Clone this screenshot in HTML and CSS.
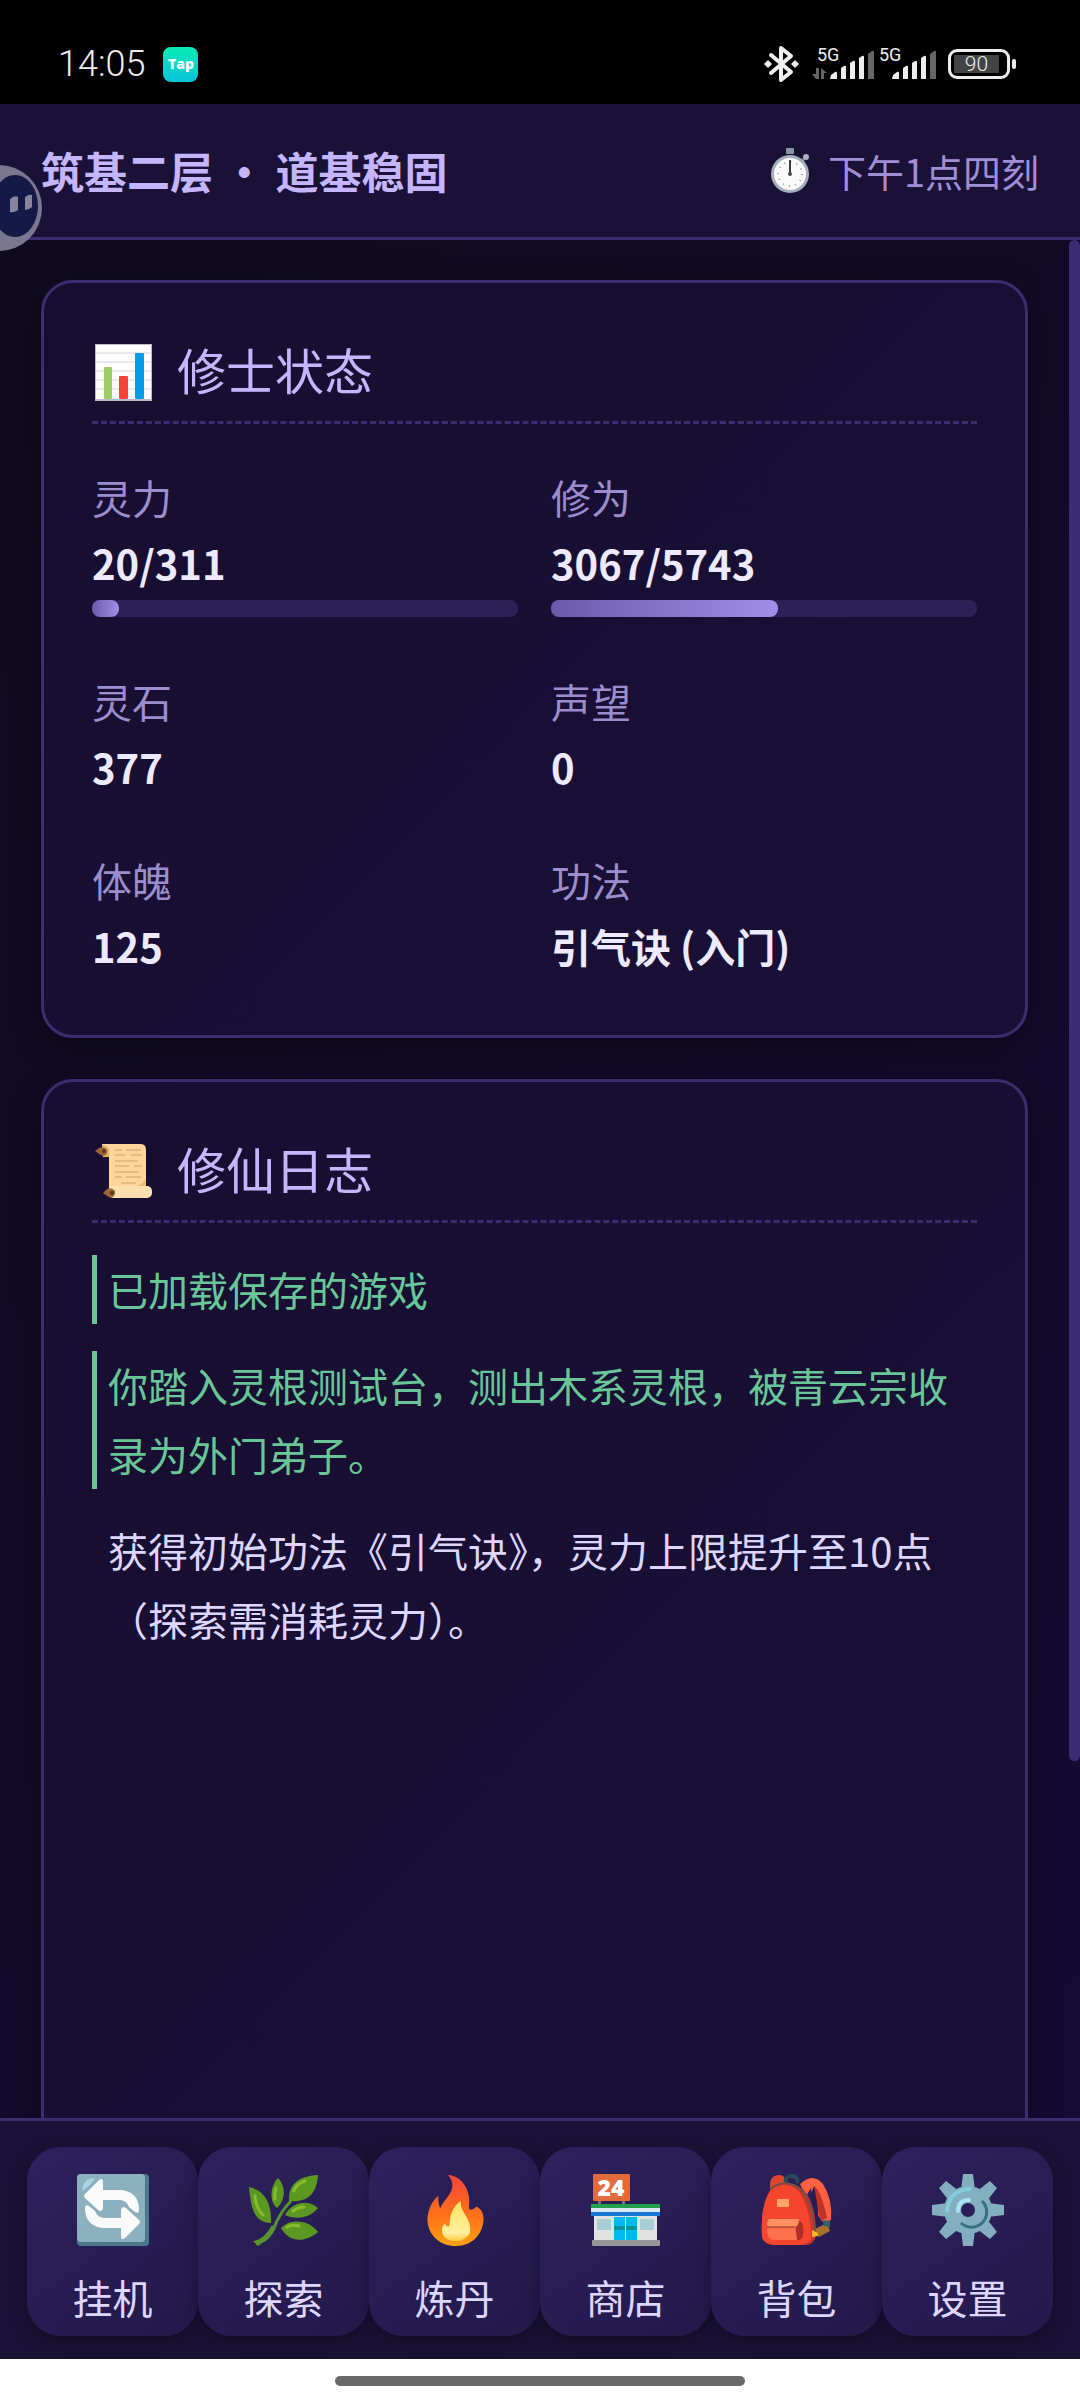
FILE: index.html
```html
<!DOCTYPE html>
<html lang="zh-CN">
<head>
  <meta charset="UTF-8" />
  <meta name="viewport" content="width=device-width, initial-scale=1.0" />
  <title>修仙日志</title>
  <link rel="stylesheet" href="styles.css">
</head>
<body>
  <div class="status-bar">
    <div class="status-left">
      <span class="clock">14:05</span>
      <span class="tap">Tap</span>
    </div>
    <div class="status-right">
      <svg class="bluetooth" viewBox="0 0 35 38" width="35" height="38">
        <path d="M7 10 L27 27 L17 35 V3 L27 11 L7 28" fill="none" stroke="#eee" stroke-width="4" stroke-linejoin="round" stroke-linecap="round" />
        <path d="M4 15 L8 19 L4 23 L0 19 Z M31 15 L35 19 L31 23 L27 19 Z" fill="#eee" />
      </svg>
      <svg class="signal" viewBox="0 0 124 36" width="124" height="36">
        <g fill="#666">
          <path d="M4 22 h3 v11 h-3 l-4 -5 h4 Z M9 22 l6 5 h-3 v6 h-3 Z" />
          <path d="M56 8 l4 -3 q2 -1 2 1 v27 h-6 Z M118 8 l4 -3 q2 -1 2 1 v27 h-6 Z" />
        </g>
        <g fill="#eee">
          <path d="M19 29 l4 -3 q2 -1 2 1 v6 h-7 Z M29 22 l3 -2 q2 -1 2 1 v12 h-5 Z M38 17 l3 -2 q2 -1 2 1 v17 h-5 Z M47 12 l3 -2 q2 -1 2 1 v22 h-5 Z" />
          <path d="M81 29 l4 -3 q2 -1 2 1 v6 h-7 Z M91 22 l3 -2 q2 -1 2 1 v12 h-5 Z M100 17 l3 -2 q2 -1 2 1 v17 h-5 Z M109 12 l3 -2 q2 -1 2 1 v22 h-5 Z" />
          <text class="net" x="5" y="15">5G</text>
          <text class="net" x="67" y="15">5G</text>
        </g>
      </svg>
      <span class="battery"><span class="battery-level">90</span></span>
    </div>
  </div>

  <div class="game">
    <header class="top">
      <h1>筑基二层 · 道基稳固</h1>
      <div class="time">
        <svg viewBox="0 0 38 45" width="38" height="45">
          <rect x="15" y="0" width="8" height="6" rx="1" fill="#8a93a6" />
          <path d="M30 14 L35 9" stroke="#6d7a8a" stroke-width="3" />
          <circle cx="35" cy="9" r="3" fill="#a8b2bf" />
          <circle cx="19" cy="26" r="19" fill="#a4b1bd" />
          <circle cx="19" cy="26" r="16" fill="#fafafa" />
          <circle cx="19" cy="26" r="12" fill="none" stroke="#9aa3ab" stroke-width="2" stroke-dasharray="1 5.28" />
          <path d="M19 12 V26" stroke="#3b3b3b" stroke-width="2" />
          <circle cx="19" cy="26" r="2" fill="#5a3b3b" />
        </svg>
        <span>下午1点四刻</span>
      </div>
    </header>

    <div class="scroll">
      <main class="content">
        <section class="card">
          <h2>
            <svg viewBox="0 0 57 57" width="57" height="57">
              <rect width="57" height="57" fill="#b8bcc8" />
              <rect x="1" y="1" width="55" height="54" fill="#fff" />
              <path d="M1 9 H56 M1 18 H56 M1 27 H56 M1 36 H56 M1 45 H56" stroke="#cfd6dd" stroke-width="1" />
              <rect x="9" y="23" width="8" height="32" rx="1" fill="#9ccc65" />
              <rect x="24" y="32" width="9" height="23" rx="1" fill="#f44336" />
              <rect x="40" y="9" width="9" height="46" rx="1" fill="#039be5" />
            </svg>
            修士状态
          </h2>
          <div class="stats">
            <div class="stat">
              <div class="label">灵力</div>
              <div class="value">20/311</div>
              <div class="bar"><div class="fill" style="width: 6.4%"></div></div>
            </div>
            <div class="stat">
              <div class="label">修为</div>
              <div class="value">3067/5743</div>
              <div class="bar"><div class="fill" style="width: 53.4%"></div></div>
            </div>
            <div class="stat">
              <div class="label">灵石</div>
              <div class="value">377</div>
            </div>
            <div class="stat">
              <div class="label">声望</div>
              <div class="value">0</div>
            </div>
            <div class="stat">
              <div class="label">体魄</div>
              <div class="value">125</div>
            </div>
            <div class="stat">
              <div class="label">功法</div>
              <div class="value">引气诀 (入门)</div>
            </div>
          </div>
        </section>

        <section class="card log">
          <h2>
            <svg viewBox="0 0 57 57" width="57" height="57">
              <path d="M7 1 H46 Q51 1 51 7 V45 H14 V14 H8 Z" fill="#ffd59b" />
              <path d="M51 36 V46 H26 Q45 45 51 36 Z" fill="#f0b96f" />
              <path d="M8 2 Q16 3 14 14 H9 Q5 9 8 2 Z" fill="#e5ad66" />
              <path d="M0 8 l4 -3 q5 -2 8 2 q1 5 -4 6 l-4 -2 Z" fill="#9a6537" />
              <circle cx="9" cy="8" r="2" fill="#5d3b1e" />
              <rect x="13" y="43" width="44" height="12" rx="5" fill="#ffdfae" />
              <path d="M8 50 l4 -4 q5 -2 8 2 q1 5 -4 7 l-4 -2 Z" fill="#9a6537" />
              <circle cx="17" cy="50" r="2" fill="#5d3b1e" />
              <path d="M20 7 h7 M31 7 h15 M20 12 h10 M36 12 h11 M20 18 h23 M20 23 h14 M39 23 h8 M20 29 h24 M20 34 h7 M31 34 h15 M26 40 h15" stroke="#cf9f66" stroke-width="1" />
            </svg>
            修仙日志
          </h2>
          <p class="entry success">已加载保存的游戏</p>
          <p class="entry success">你踏入灵根测试台，测出木系灵根，被青云宗收录为外门弟子。</p>
          <p class="entry">获得初始功法《引气诀》，灵力上限提升至10点（探索需消耗灵力）。</p>
        </section>
      </main>
      <div class="scrollbar"><div class="thumb"></div></div>
    </div>

    <nav class="actions">
      <button type="button">
        <svg viewBox="0 0 72 72" width="72" height="72">
          <rect width="72" height="72" rx="4" fill="#4c788a" />
          <rect width="68" height="68" rx="4" fill="#8db0bf" />
          <path d="M5 17 Q6 4 18 4 Q14 12 5 17 Z" fill="#a9d2e2" />
          <path d="M8 20 L22 6 Q26 3 26 8 V16 H44 Q62 18 62 36 Q62 40 58 38 L52 33 Q50 27 43 26 H26 V34 Q25 39 21 36 L8 24 Q6 22 8 20 Z" fill="#fafafa" />
          <path d="M8 20 L22 6 Q26 3 26 8 V16 H44 Q62 18 62 36 Q62 40 58 38 L52 33 Q50 27 43 26 H26 V34 Q25 39 21 36 L8 24 Q6 22 8 20 Z" fill="#fafafa" transform="rotate(180 35 35)" />
        </svg>
        <span>挂机</span>
      </button>
      <button type="button">
        <svg viewBox="0 0 72 72" width="72" height="72">
          <path d="M8 70 Q18 67 26 54 Q32 38 43 27" fill="none" stroke="#57952b" stroke-width="3" />
          <path d="M5 67 Q16 66 24 51 L28 54 Q22 66 14 69 L10 72 Z" fill="#57952b" />
          <g fill="#5b9821">
            <path d="M1 13 C14 16 24 26 23 49 C6 49 3 34 1 13 Z" />
            <path d="M30 4 C38 12 38 26 29 34 C21 28 22 12 30 4 Z" />
            <path d="M70 1 C69 19 60 29 41 27 C40 11 50 2 70 1 Z" />
            <path d="M70 34 C62 44 49 46 37 41 C44 28 60 25 70 34 Z" />
            <path d="M70 58 C58 68 42 70 33 54 C44 43 62 47 70 58 Z" />
          </g>
          <g fill="none" stroke="#87bd2b" stroke-width="3" stroke-linecap="round">
            <path d="M7 22 Q8 34 15 41" />
            <path d="M28 14 Q26 20 27 25" />
            <path d="M46 17 Q48 10 57 7" />
            <path d="M45 37 Q50 33 56 33" />
            <path d="M39 53 Q44 50 51 52" />
          </g>
        </svg>
        <span>探索</span>
      </button>
      <button type="button">
        <svg viewBox="-8 0 72 73" width="72" height="72">
          <defs>
            <linearGradient id="flame" x1="0" y1="0" x2="0" y2="1">
              <stop offset="0" stop-color="#f4433c" />
              <stop offset="0.6" stop-color="#ff7417" />
              <stop offset="1" stop-color="#fca311" />
            </linearGradient>
            <linearGradient id="core" x1="0" y1="0" x2="0" y2="1">
              <stop offset="0" stop-color="#ffe45c" />
              <stop offset="0.8" stop-color="#fff0a0" />
              <stop offset="1" stop-color="#ffc93c" />
            </linearGradient>
          </defs>
          <path d="M21 1 C36 2 45 18 42 35 Q45 38 50 33 C55 36 57 40 57 46 C56 62 45 73 29 73 C12 73 0 61 0 45 C1 35 5 27 11 22 Q11 30 13 35 C17 24 33 16 21 1 Z" fill="url(#flame)" />
          <path d="M34 27 C32 39 46 44 43 60 Q38 68 29 68 Q18 68 15 60 Q14 53 18 50 Q19 54 22 53 C24 51 20 37 34 27 Z" fill="url(#core)" />
        </svg>
        <span>炼丹</span>
      </button>
      <button type="button">
        <svg viewBox="-1 0 72 72" width="72" height="72">
          <path d="M7 26 h3 v5 h-3 Z M31 26 h3 v5 h-3 Z" fill="#757575" />
          <rect x="2" y="0" width="37" height="27" rx="1" fill="#e16b3b" />
          <text class="sign" x="20" y="22">24</text>
          <rect x="3" y="42" width="63" height="26" fill="#e2e2e2" />
          <rect x="0" y="30" width="69" height="12" rx="1" fill="#1f9bd8" />
          <rect x="0" y="30" width="69" height="5" fill="#22a14c" />
          <rect x="0" y="34" width="69" height="4" fill="#d9e8f4" />
          <rect x="0" y="38" width="69" height="4" fill="#1976d2" />
          <rect x="23" y="43" width="23" height="24" fill="#00b8f0" />
          <rect x="23" y="52" width="23" height="4" fill="#10919c" />
          <rect x="34" y="43" width="1" height="24" fill="#c8eefa" />
          <rect x="6" y="45" width="14" height="11" fill="#a9cdd5" />
          <rect x="49" y="45" width="14" height="11" fill="#a9cdd5" />
          <rect x="1" y="66" width="68" height="6" rx="1" fill="#95959a" />
        </svg>
        <span>商店</span>
      </button>
      <button type="button">
        <svg viewBox="0 0 72 72" width="72" height="72">
          <path d="M9 14 Q8 2 17 1 Q26 0 24 11 Z" fill="#e0452f" />
          <path d="M25 8 Q24 2 31 2 Q38 3 36 9" fill="none" stroke="#2b4a5a" stroke-width="4" />
          <path d="M39 10 Q52 -2 62 10 Q72 26 70 46 L63 49 Q53 40 50 14 L45 22 Z" fill="#ff6042" />
          <path d="M53 12 Q57 18 57 42 Q52 34 50 20 Z" fill="#281d54" />
          <path d="M53 12 Q60 16 66 44 L61 46 Q57 42 57 34 Z" fill="#c4302a" />
          <path d="M52 56 L66 49 L69 57 L58 63 Z" fill="#a8712b" />
          <path d="M62 46 l7 1 v6 l-6 -1 Z" fill="#37616b" />
          <path d="M9 16 Q24 2 43 16 Q55 30 55 62 Q52 71 45 71 H14 Q3 70 1 63 Q-1 34 9 16 Z" fill="#cc352b" />
          <path d="M9 17 Q24 4 38 18 Q50 34 50 66 Q45 71 35 71 H12 Q2 70 1 62 Q-1 33 9 17 Z" fill="#f6452f" />
          <path d="M9 15 Q24 4 38 14 Q52 26 54 60" fill="none" stroke="#6e5447" stroke-width="2" />
          <rect x="16" y="25" width="12" height="8" rx="1" fill="#ffa468" />
          <path d="M6 50 H38 Q43 58 38 66 H12 Q5 65 6 50 Z" fill="#ff704f" />
          <path d="M34 49 Q44 42 42 62 Q40 67 36 66 Z" fill="#b12d26" />
          <path d="M8 45 H38 Q38 52 34 53 H8 Q4 50 8 45 Z" fill="#ff9060" />
          <path d="M6 53 H34" stroke="#8d2a20" stroke-width="1" />
          <path d="M51 56 l6 3 v3 l-6 1 Z" fill="#f5b921" />
        </svg>
        <span>背包</span>
      </button>
      <button type="button">
        <svg viewBox="0 0 72 72" width="72" height="72">
          <g fill="#82aebd">
            <circle cx="36" cy="36" r="24" />
            <path d="M31 0 H41 L43 16 H29 Z M31 72 H41 L43 56 H29 Z M0 31 V41 L16 43 V29 Z M72 31 V41 L56 43 V29 Z" />
            <path d="M31 0 H41 L43 16 H29 Z M31 72 H41 L43 56 H29 Z M0 31 V41 L16 43 V29 Z M72 31 V41 L56 43 V29 Z" transform="rotate(45 36 36)" />
          </g>
          <path d="M15 37 Q17 16 38 15" fill="none" stroke="#83cbdb" stroke-width="4" stroke-linecap="round" />
          <path d="M50 27 A15 15 0 0 1 29 49" fill="none" stroke="#36727f" stroke-width="3" />
          <path d="M26 37 Q26 26 37 26" fill="none" stroke="#a5e4f0" stroke-width="4" stroke-linecap="round" />
          <circle cx="36" cy="36" r="7" fill="#281d54" />
        </svg>
        <span>设置</span>
      </button>
    </nav>
  </div>

  <div class="gesture"><div class="pill"></div></div>

  <!-- floating assistant, half hidden behind the left edge -->
  <svg class="assistant" viewBox="0 0 44 88" width="44" height="88">
    <circle cx="-1" cy="44" r="43" fill="#7b7690" />
    <ellipse cx="15" cy="42" rx="23" ry="31" fill="#141a45" />
    <path d="M10 35 q4 -4 8 -2 v13 q-4 3 -8 2 Z M25 33 q4 -3 7 -2 v12 q-3 3 -7 3 Z" fill="#8884a0" />
  </svg>
</body>
</html>
```
FILE: styles.css
```css
* {
  box-sizing: border-box;
}

body {
  margin: 0;
  height: 100vh;
  display: flex;
  flex-direction: column;
  position: relative;
  overflow: hidden;
  font-family: "Noto Sans CJK SC", sans-serif;
  font-size: 40px;
  line-height: 69px;
  background-color: #000;
  color: #ddd6fe;
}

h1, h2, p {
  margin: 0;
}

svg {
  display: block;
  flex: none;
  overflow: visible;
}

/* phone status bar */
.status-bar {
  height: 104px;
  padding: 24px 70px 0 58px;
  display: flex;
  justify-content: space-between;
  align-items: center;
  color: #eee;
}

.status-left, .status-right {
  display: flex;
  align-items: center;
}

.clock {
  font-family: Roboto, sans-serif;
  font-weight: 300;
  font-size: 36px;
  line-height: 36px;
}

.tap {
  width: 35px;
  height: 35px;
  margin-left: 18px;
  border-radius: 8px;
  background: linear-gradient(#0ceab3, #06c5dc);
  color: #fff;
  font-family: "Open Sans", sans-serif;
  font-weight: 800;
  font-size: 14px;
  line-height: 33px;
  text-align: center;
}

.signal {
  margin: 0 12px 0 13px;
}

.net {
  font-family: Roboto, sans-serif;
  font-size: 18px;
}

.battery {
  position: relative;
  width: 62px;
  height: 30px;
  padding: 3px;
  border: 3px solid #eee;
  border-radius: 9px;
}

.battery::after {
  content: "";
  position: absolute;
  right: -9px;
  top: 7px;
  width: 4px;
  height: 10px;
  border-radius: 2px;
  background-color: #eee;
}

.battery-level {
  display: block;
  width: 45px;
  height: 18px;
  background-color: #444;
  font-family: Roboto, sans-serif;
  font-weight: 300;
  font-size: 21px;
  line-height: 19px;
  text-align: center;
}

/* game window */
.game {
  flex: 1;
  min-height: 0;
  display: flex;
  flex-direction: column;
  background: linear-gradient(135deg, #0f0a1e, #160b35);
}

.top {
  height: 136px;
  padding: 0 41px;
  display: flex;
  justify-content: space-between;
  align-items: center;
  background-color: #1a1236;
  border-bottom: 3px solid #3b2d6e;
}

.top h1 {
  font-size: 43px;
  font-weight: 600;
  color: #c4b5fd;
}

.time {
  display: flex;
  align-items: center;
  gap: 19px;
  font-size: 38px;
  color: #a08fd6;
}

.scroll {
  flex: 1;
  min-height: 0;
  display: flex;
  overflow: hidden;
}

.content {
  flex: 1;
  padding: 40px 41px;
}

.scrollbar {
  width: 11px;
}

.thumb {
  height: 81%;
  border-radius: 6px;
  background-color: #3b2c75;
}

.card {
  margin-bottom: 41px;
  padding: 48px;
  border: 3px solid #3b2d6e;
  border-radius: 32px;
  background: linear-gradient(135deg, #170e31, #1a1037);
  box-shadow: 0 8px 32px rgba(0, 0, 0, 0.4);
}

.card h2 {
  display: flex;
  align-items: center;
  gap: 25px;
  height: 93px;
  padding: 0 0 15px 3px;
  margin-bottom: 40px;
  border-bottom: 3px dashed #3b2d6e;
  font-size: 49px;
  font-weight: 400;
  color: #c4b5fd;
}

.card h2 svg {
  margin-top: 8px;
}

.stats {
  display: grid;
  grid-template-columns: 1fr 1fr;
  gap: 47px 33px;
  margin-bottom: 8px;
}

.label, .value {
  line-height: 66px;
}

.label {
  color: #9c8dcc;
}

.value {
  font-weight: 600;
  color: #ede9fe;
}

.bar {
  height: 17px;
  margin: 4px 0;
  border-radius: 8px;
  background-color: #2c2056;
}

.fill {
  height: 100%;
  border-radius: 8px;
  background: linear-gradient(90deg, #6b5aab, #a08fea);
}

.log {
  min-height: 1200px;
}

.log h2 {
  margin-bottom: 32px;
}

.entry {
  margin-bottom: 27px;
  padding-left: 11px;
  border-left: 5px solid transparent;
}

.entry.success {
  border-left-color: #68c698;
  color: #68c698;
}

/* bottom actions */
.actions {
  display: flex;
  padding: 26px 27px 23px;
  background-color: #1a1236;
  border-top: 3px solid #3b2d6e;
}

.actions button {
  flex: 1;
  height: 189px;
  padding: 27px 0 0;
  display: flex;
  flex-direction: column;
  align-items: center;
  gap: 17px;
  border: none;
  border-radius: 34px;
  background: linear-gradient(145deg, #2e215e, #23194a);
  box-shadow: 0 6px 16px rgba(0, 0, 0, 0.3);
  color: #ddd6fe;
  font-family: inherit;
  font-size: 40px;
  line-height: 69px;
  cursor: pointer;
}

.sign {
  font-family: "Open Sans", sans-serif;
  font-weight: 800;
  font-size: 23px;
  fill: #fff;
  text-anchor: middle;
}

/* gesture area */
.gesture {
  height: 44px;
  padding-top: 17px;
  background-color: #fff;
}

.pill {
  width: 38%;
  height: 10px;
  margin: 0 auto;
  border-radius: 5px;
  background-color: #6a6a6a;
}

.assistant {
  position: absolute;
  left: 0;
  top: 164px;
}
```
